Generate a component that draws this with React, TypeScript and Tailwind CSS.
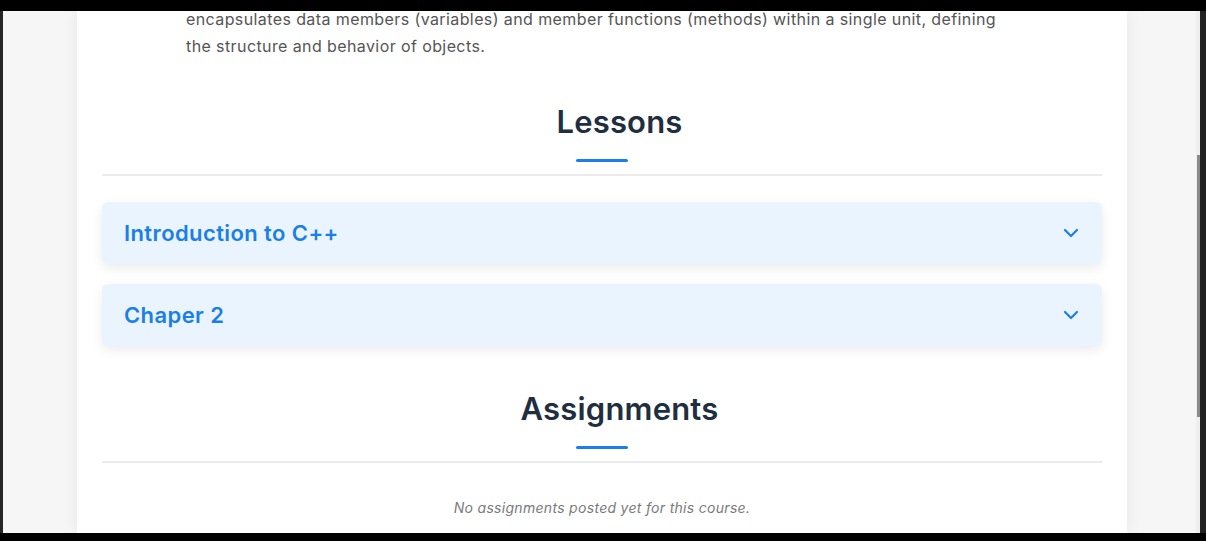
import React from "react";

function Chevron() {
  return (
    <svg width="16" height="10" viewBox="0 0 16 10" fill="none">
      <path d="M2 2l6 6 6-6" stroke="#1a7fe8" strokeWidth="2.2" strokeLinecap="round" strokeLinejoin="round" />
    </svg>
  );
}

function SectionHeading({ title }: { title: string }) {
  return (
    <div className="flex flex-col items-center">
      <h2 className="w-full pl-[35px] text-center text-[31px] leading-[36px] font-semibold text-[#1f2f3f] tracking-[0.2px]">
        {title}
      </h2>
      <div className="mt-[19px] h-[3px] w-[52px] rounded-full bg-[#1a7fe8]" />
      <div className="mt-[12px] h-[2px] w-full bg-[#ebebeb]" />
    </div>
  );
}

function Lesson({ title }: { title: string }) {
  return (
    <div className="flex h-[62px] items-center justify-between rounded-[6px] bg-[#eaf4fe] pl-[22px] pr-[23px] shadow-[0_4px_12px_rgba(0,0,0,0.08)]">
      <span className="text-[22px] font-semibold tracking-[0.4px] text-[#1a7fe8]">{title}</span>
      <Chevron />
    </div>
  );
}

export default function App() {
  return (
    <div
      className="flex h-screen w-full flex-col overflow-hidden bg-[#1c1c1c]"
      style={{ fontFamily: "Inter, 'Noto Sans', sans-serif" }}
    >
      <div className="h-[11px] shrink-0 bg-black" />
      <div className="flex min-h-0 flex-1">
        <div className="w-[3px] shrink-0 bg-[#262626]" />
        <div className="relative w-[1193px] shrink-0 overflow-hidden bg-[#f5f6f5]">
          <div className="ml-[74px] flex h-full w-[1050px] flex-col bg-white px-[25px] shadow-[0_0_14px_rgba(0,0,0,0.07)]">
            <p className="-mt-[5px] ml-[84px] text-[16px] leading-[27px] tracking-[0.4px] text-[#555555]">
              encapsulates data members (variables) and member functions (methods) within a single unit, defining
              <br />
              the structure and behavior of objects.
            </p>
            <div className="mt-[44px]">
              <SectionHeading title="Lessons" />
            </div>
            <div className="mt-[26px] flex flex-col gap-[20px]">
              <Lesson title="Introduction to C++" />
              <Lesson title="Chaper 2" />
            </div>
            <div className="mt-[45px]">
              <SectionHeading title="Assignments" />
            </div>
            <p className="mt-[35px] text-center text-[14px] leading-[20px] italic text-[#7a7a7a] tracking-[0.3px]">
              No assignments posted yet for this course.
            </p>
          </div>
        </div>
        <div className="flex w-[4px] shrink-0 bg-[#eeeeee] pt-[144px]">
          <div className="ml-[1px] h-[262px] w-[3px] shrink-0 bg-[#8a8a8a]" />
        </div>
        <div className="min-w-0 flex-1 bg-[#222222]" />
      </div>
      <div className="h-[8px] shrink-0 bg-black" />
    </div>
  );
}
